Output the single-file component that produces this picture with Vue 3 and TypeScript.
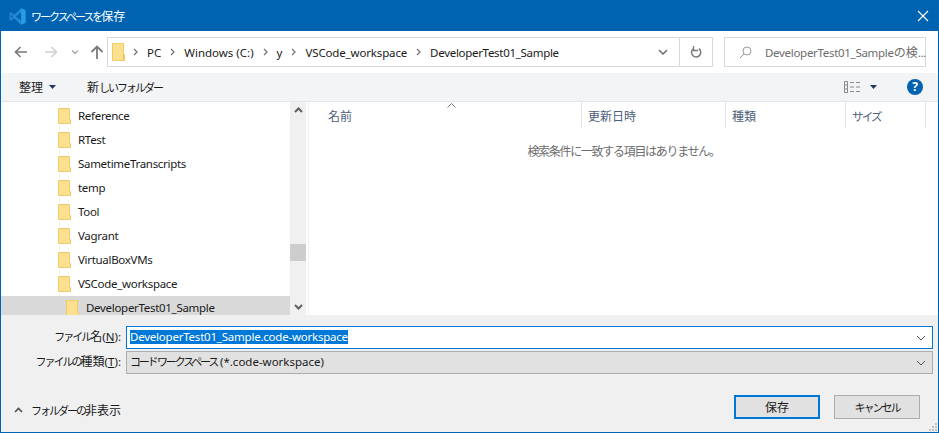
<script setup lang="ts">
const crumbs = ['PC', 'Windows (C:)', 'y', 'VSCode_workspace', 'DeveloperTest01_Sample']
const folders = ['Reference', 'RTest', 'SametimeTranscripts', 'temp', 'Tool', 'Vagrant', 'VirtualBoxVMs', 'VSCode_workspace']
const columns = [
  { name: '名前', width: 273, cls: 'j' },
  { name: '更新日時', width: 144, cls: 'j' },
  { name: '種類', width: 120, cls: 'j' },
  { name: 'サイズ', width: 80, cls: 'k-size' },
]
</script>

<template>
  <div class="dialog">
    <header class="titlebar">
      <svg class="logo" width="17" height="17" viewBox="0 0 100 100">
        <path d="M71 99 97 87V13L71 1 30 39 12 25 3 30v40l9 5 18-14z" fill="#1f8ad2" />
        <path d="M71 1 97 13V87L71 99z" fill="#2a9be6" />
        <path d="M71 27v46L40 50z" fill="#0063b1" />
        <path d="M12 37 24 50 12 63z" fill="#0063b1" />
      </svg>
      <span class="title"><span class="k">ワークスペースを</span><span class="j">保存</span></span>
      <svg class="close" width="12" height="12" viewBox="0 0 12 12">
        <path d="M1 1 11 11M11 1 1 11" stroke="#fff" stroke-width="1.1" fill="none" />
      </svg>
    </header>

    <div class="navrow">
      <div class="navbtns">
        <svg width="14" height="14" viewBox="0 0 14 14"><path d="M13 7H1.500M6.500 2 1.500 7l5 5" stroke="#7a7a7a" stroke-width="1.6" fill="none" /></svg>
        <svg class="fwd" width="14" height="14" viewBox="0 0 14 14"><path d="M1 7h11.500M7.500 2l5 5-5 5" stroke="#d0d0d0" stroke-width="1.6" fill="none" /></svg>
        <svg class="hist" width="8" height="6" viewBox="0 0 8 6"><path d="M1 1.500 4 4.500 7 1.500" stroke="#a8a8a8" stroke-width="1.4" fill="none" /></svg>
        <svg class="up" width="14" height="14" viewBox="0 0 14 14"><path d="M7 14V2M1.500 7 7 1.500 12.500 7" stroke="#7a7a7a" stroke-width="1.8" fill="none" /></svg>
      </div>
      <div class="address">
        <svg class="addr-folder" width="13" height="18" viewBox="0 0 13 18">
          <path d="M.5.500h11v11h1v6H.5z" fill="#fbe08f" stroke="#f0cc66" />
          <path d="M11.500 11.500v6" stroke="#e9c25a" fill="none" />
        </svg>
        <div class="crumbs">
          <template v-for="c in crumbs" :key="c">
            <svg class="sep" width="5" height="8" viewBox="0 0 5 8"><path d="M1 1l3 3-3 3" stroke="#777" stroke-width="1.300" fill="none" /></svg>
            <span class="crumb">{{ c }}</span>
          </template>
        </div>
        <div class="addr-drop">
          <svg width="10" height="6" viewBox="0 0 10 6"><path d="M1 1 5 5 9 1" stroke="#6e6e6e" stroke-width="1.500" fill="none" /></svg>
        </div>
        <div class="addr-refresh">
          <svg width="12" height="13" viewBox="0 0 12 13">
            <path d="M8.800 2.600A4.600 4.600 0 1 1 3 3" stroke="#777" stroke-width="1.500" fill="none" />
            <path d="M3.500 0v4.500H8" stroke="#777" stroke-width="1.300" fill="none" />
          </svg>
        </div>
      </div>
      <div class="search">
        <svg class="search-icon" width="13" height="13" viewBox="0 0 13 13">
          <circle cx="8" cy="5" r="4" stroke="#9a9a9a" fill="none" />
          <path d="M5 8 1 12" stroke="#b08a70" fill="none" />
        </svg>
        <span class="search-text">DeveloperTest01_Sample<span class="j">の検</span>...</span>
      </div>
    </div>

    <div class="toolbar">
      <span class="tool j">整理</span>
      <svg class="caret" width="7" height="4" viewBox="0 0 7 4"><path d="M0 0h7L3.500 4z" fill="#1e3a5f" /></svg>
      <span class="tool newfolder"><span class="j">新</span><span class="k">しいフォルダー</span></span>
      <svg class="views" width="16" height="12" viewBox="0 0 16 12">
        <path d="M.5.500h3v11h-3zM.5 4h3M.5 8h3" stroke="#8a8a8a" fill="none" />
        <path d="M6 1.500h4M12 1.500h4M6 6h4M12 6h4M6 10.500h4M12 10.500h4" stroke="#8a8a8a" fill="none" />
      </svg>
      <svg class="caret views-caret" width="7" height="4" viewBox="0 0 7 4"><path d="M0 0h7L3.500 4z" fill="#1e3a5f" /></svg>
      <span class="help">?</span>
    </div>

    <div class="main">
      <div class="tree">
        <div v-for="f in folders" :key="f" class="tree-row">
          <svg class="folder" width="13" height="16" viewBox="0 0 13 16">
            <path d="M.5.500h11v11h1v4H.5z" fill="#fbe08f" stroke="#f0cc66" />
          </svg>
          <span>{{ f }}</span>
        </div>
        <div class="tree-row selected">
          <svg class="folder" width="13" height="16" viewBox="0 0 13 16">
            <path d="M.5.500h11v11h1v4H.5z" fill="#fbe08f" stroke="#f0cc66" />
          </svg>
          <span>DeveloperTest01_Sample</span>
        </div>
      </div>
      <div class="scrollbar">
        <svg class="sb-arrow" width="9" height="6" viewBox="0 0 9 6"><path d="M1 5 4.500 1.500 8 5" stroke="#606060" stroke-width="2" fill="none" /></svg>
        <div class="sb-track"><div class="sb-thumb"></div></div>
        <svg class="sb-arrow" width="9" height="6" viewBox="0 0 9 6"><path d="M1 1 4.500 4.500 8 1" stroke="#606060" stroke-width="2" fill="none" /></svg>
      </div>
      <div class="splitter"></div>
      <div class="list">
        <svg class="sort" width="9" height="5" viewBox="0 0 9 5"><path d="M.5 4.500 4.500.5l4 4" stroke="#777" fill="none" /></svg>
        <div class="list-head">
          <div v-for="c in columns" :key="c.name" class="col" :style="{ width: c.width + 'px' }"><span :class="c.cls">{{ c.name }}</span></div>
        </div>
        <div class="empty">検索条件に一致する項目はありません。</div>
      </div>
    </div>

    <footer class="bottom">
      <div class="field">
        <label class="lbl"><span class="k">ファイル</span><span class="j">名</span>(<u>N</u>):</label>
        <div class="input active">
          <span class="selection">DeveloperTest01_Sample.code-workspace</span>
          <svg width="10" height="6" viewBox="0 0 10 6"><path d="M1 1 5 5 9 1" stroke="#555" fill="none" /></svg>
        </div>
      </div>
      <div class="field second">
        <label class="lbl"><span class="k">ファイルの</span><span class="j">種類</span>(<u>T</u>):</label>
        <div class="input combo">
          <span class="combo-text"><span class="k narrow">コード ワークスペース</span> (*.code-workspace)</span>
          <svg width="10" height="6" viewBox="0 0 10 6"><path d="M1 1 5 5 9 1" stroke="#555" fill="none" /></svg>
        </div>
      </div>
      <div class="actions">
        <div class="hide">
          <svg width="9" height="6" viewBox="0 0 9 6"><path d="M1 5 4.500 1.500 8 5" stroke="#505050" stroke-width="1.600" fill="none" /></svg>
          <span><span class="k">フォルダーの</span><span class="j">非表示</span></span>
        </div>
        <button class="btn primary"><span class="j">保存</span></button>
        <button class="btn"><span class="k">キャンセル</span></button>
      </div>
      <svg class="grip" width="9" height="9" viewBox="0 0 9 9">
        <path d="M6 0h2v2H6zM3 3h2v2H3zM6 3h2v2H6zM0 6h2v2H0zM3 6h2v2H3zM6 6h2v2H6z" fill="#c4c4c4" />
      </svg>
    </footer>
  </div>
</template>

<style>
html, body { margin: 0; padding: 0; background: #fff; }
</style>

<style scoped>
.dialog {
  width: 939px;
  height: 433px;
  box-sizing: border-box;
  border: 1px solid #0063b1;
  display: flex;
  flex-direction: column;
  overflow: hidden;
  background: #fff;
  color: #1a1a1a;
  font-family: "Noto Sans", "Noto Sans CJK JP", sans-serif;
  font-size: 11.5px;
  letter-spacing: -.3px;
  position: relative;
}
.j { font-size: 12px; letter-spacing: 0; }
.k { font-size: 11px; letter-spacing: -2px; }
.k-size { font-size: 11.500px; letter-spacing: -1.800px; }
.k.narrow { letter-spacing: -2.200px; }
.titlebar {
  height: 30px;
  flex: none;
  background: #0063b1;
  display: flex;
  align-items: center;
  color: #fff;
  padding-left: 8px;
}
.logo { flex: none; }
.title { margin-left: 5px; }
.close { margin-left: auto; margin-right: 9px; }
.navrow {
  height: 42px;
  flex: none;
  display: flex;
  align-items: center;
  background: #fff;
}
.navbtns {
  width: 106px;
  flex: none;
  display: flex;
  align-items: center;
  padding-left: 13px;
  box-sizing: border-box;
}
.fwd { margin-left: 16px; }
.hist { margin-left: 13px; }
.up { margin-left: 11px; }
.address {
  width: 606px;
  height: 30px;
  box-sizing: border-box;
  border: 1px solid #d9d9d9;
  display: flex;
  align-items: center;
  flex: none;
}
.addr-folder { margin-left: 4px; flex: none; }
.crumbs { display: flex; align-items: center; flex: 1; white-space: nowrap; }
.sep { margin: 0 9px 0 9px; flex: none; }
.sep:first-child { margin-left: 8px; }
.crumb { letter-spacing: 0; }
.crumb:nth-of-type(4) { letter-spacing: -.15px; }
.crumb:last-child { letter-spacing: -.3px; }
.addr-drop {
  width: 33px;
  display: flex;
  justify-content: center;
  flex: none;
}
.addr-refresh {
  width: 33px;
  height: 28px;
  border-left: 1px solid #d9d9d9;
  display: flex;
  align-items: center;
  justify-content: center;
  flex: none;
  box-sizing: border-box;
}
.search {
  width: 202px;
  height: 30px;
  box-sizing: border-box;
  margin-left: 11px;
  border: 1px solid #d9d9d9;
  display: flex;
  align-items: center;
  padding-left: 14px;
  flex: none;
}
.search-icon { flex: none; }
.search-text { margin-left: 13px; color: #6d6d6d; white-space: nowrap; }
.toolbar {
  height: 29px;
  flex: none;
  background: #f3f4f6;
  border-bottom: 1px solid #e4e6e9;
  display: flex;
  align-items: center;
  padding-left: 18px;
  box-sizing: border-box;
}
.tool { color: #1a1a1a; }
.caret { margin-left: 6px; flex: none; }
.newfolder { margin-left: 31px; }
.views { margin-left: auto; }
.views-caret { margin-left: 10px; }
.help {
  width: 16px;
  height: 16px;
  border-radius: 50%;
  background: #0063b1;
  color: #fff;
  font-weight: 700;
  font-size: 12px;
  line-height: 16px;
  text-align: center;
  margin: 0 15px 0 30px;
}
.main {
  flex: 1;
  min-height: 0;
  display: flex;
  background: #fff;
}
.tree { width: 289px; flex: none; overflow: hidden; padding-top: 2px; }
.tree-row {
  height: 24px;
  display: flex;
  align-items: center;
  padding-left: 57px;
  flex: none;
}
.tree-row span { margin-bottom: 2px; }
.tree-row .folder { margin-right: 7px; flex: none; }
.tree-row.selected { background: #d9d9d9; padding-left: 65px; }
.scrollbar {
  width: 16px;
  flex: none;
  background: #f0f0f0;
  display: flex;
  flex-direction: column;
  align-items: center;
}
.sb-arrow { flex: none; margin: 5px 0; }
.sb-track { flex: 1; width: 100%; position: relative; }
.sb-thumb { position: absolute; left: 0; right: 0; top: 126px; height: 17px; background: #cdcdcd; }
.splitter { width: 1px; margin-left: 2px; background: #f0f0f0; flex: none; }
.list { flex: 1; position: relative; }
.sort { position: absolute; left: 138px; top: 1px; }
.list-head { display: flex; height: 26px; }
.col {
  box-sizing: border-box;
  padding-left: 19px;
  border-right: 1px solid #e5e5e5;
  color: #4c607a;
  line-height: 30px;
}
.col + .col { padding-left: 6px; }
.empty {
  text-align: center;
  color: #6d6d6d;
  margin-top: 14px;
  font-size: 12px;
  letter-spacing: -1.300px;
}
.bottom {
  height: 117px;
  flex: none;
  background: #f0f0f0;
  position: relative;
  display: flex;
  flex-direction: column;
  padding-top: 11px;
  box-sizing: border-box;
}
.field { display: flex; align-items: center; height: 23px; }
.second { margin-top: 2px; }
.lbl { width: 120px; text-align: right; flex: none; white-space: nowrap; margin-bottom: 3px; letter-spacing: 0; }
.input {
  width: 807px;
  margin-left: 5px;
  height: 23px;
  box-sizing: border-box;
  display: flex;
  align-items: center;
  justify-content: space-between;
  padding: 0 3px 0 3px;
  flex: none;
}
.input svg { margin-right: 3px; }
.active { border: 1px solid #0078d7; background: #fff; }
.selection { background: #0078d7; color: #fff; line-height: 14px; margin-bottom: 2px; letter-spacing: -.22px; }
.combo { border: 1px solid #adadad; background: #e1e1e1; }
.combo-text { letter-spacing: 0; margin-bottom: 3px; }
.actions {
  display: flex;
  align-items: center;
  margin-top: 21px;
}
.hide { display: flex; align-items: center; gap: 8px; margin: 6px auto 0 13px; }
.btn {
  width: 86px;
  height: 24px;
  box-sizing: border-box;
  border: 1px solid #adadad;
  background: #e1e1e1;
  font: inherit;
  letter-spacing: inherit;
  color: #1a1a1a;
  padding: 0;
  margin: 0 18px 0 14px;
  flex: none;
}
.btn.primary { border: 2px solid #0078d7; margin: 0; }
.grip { position: absolute; right: 0; bottom: 0; }
</style>
